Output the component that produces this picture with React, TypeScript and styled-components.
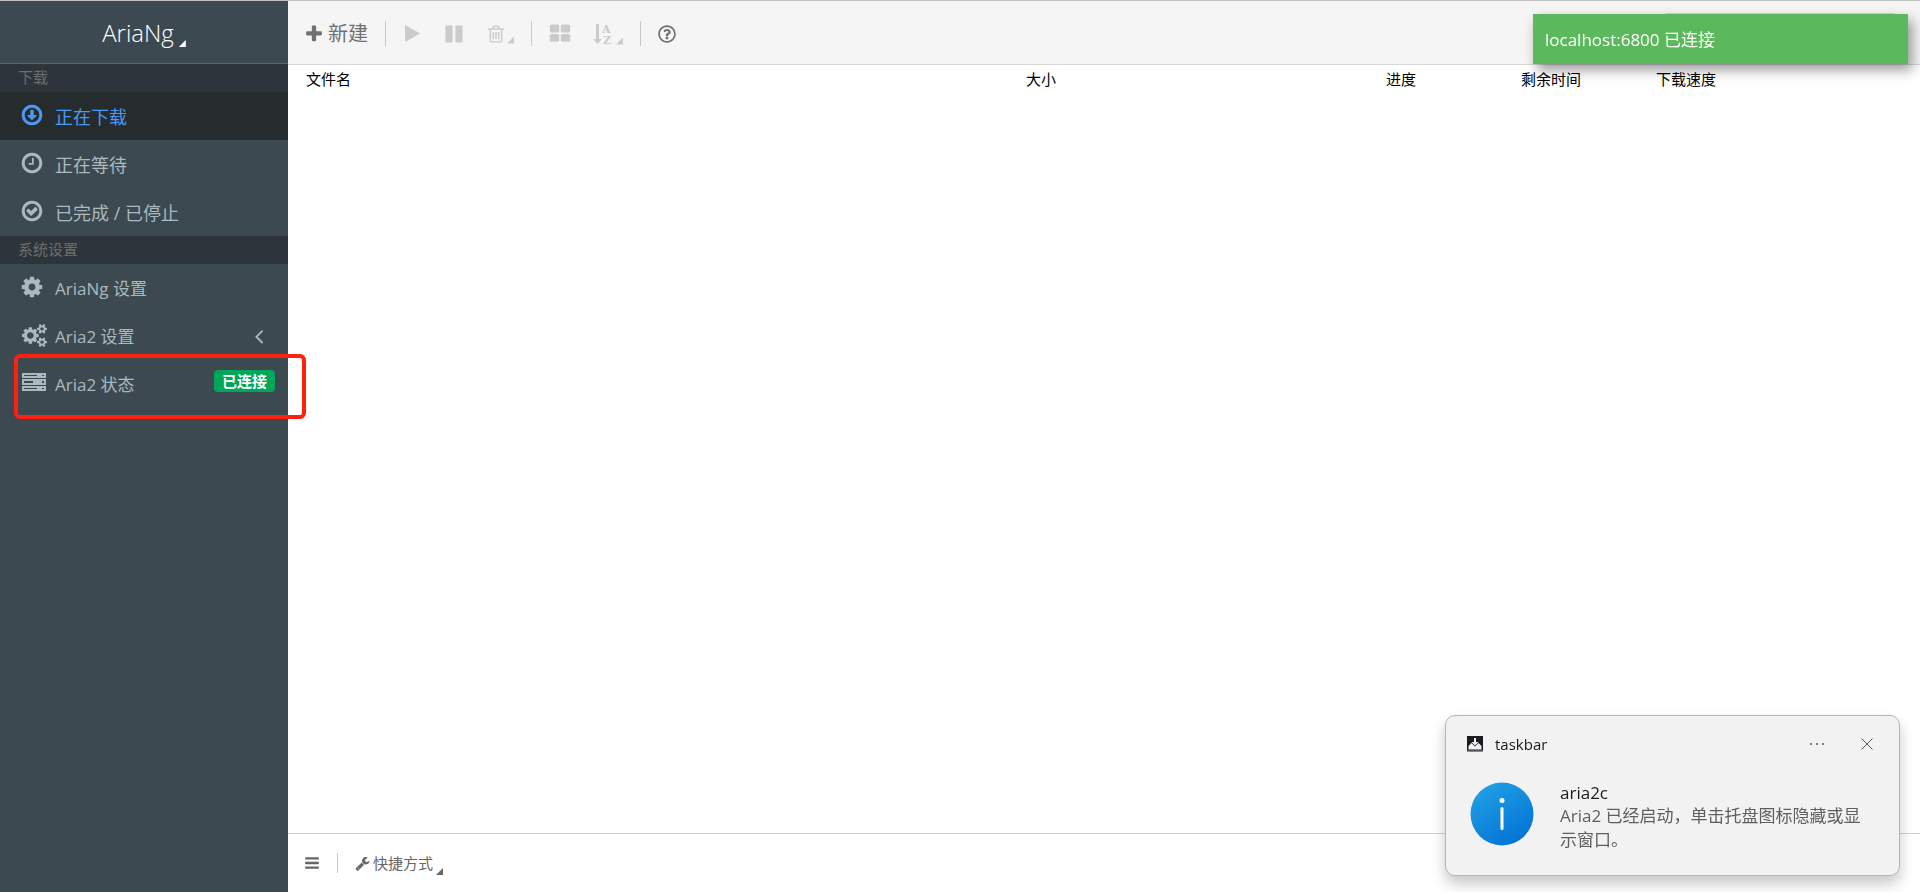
import React from 'react';
import styled, { createGlobalStyle } from 'styled-components';
import { FaRegQuestionCircle } from 'react-icons/fa';

const GlobalStyle = createGlobalStyle`
  *, *::before, *::after { box-sizing: border-box; }
  body {
    margin: 0;
    background: #fff;
    color: #000;
    font-family: "Open Sans", "Noto Sans CJK SC", sans-serif;
    font-size: 17px;
  }
  button, input { font: inherit; color: inherit; }
  button { border: 0; padding: 0; background: none; cursor: pointer; }
  a { color: inherit; text-decoration: none; }
`;

const RING =
  'M1440 896q0-148-73-273t-198-198-273-73-273 73-198 198-73 273 73 273 198 198 273 73 273-73 198-198 73-273zm224 0q0 209-103 385.5t-279.5 279.5-385.5 103-385.5-103-279.5-279.5-103-385.5 103-385.5 279.5-279.5 385.5-103 385.5 103 279.5 279.5 103 385.5z';

const SMALL_COG =
  'v140q0 16-149 31-12 27-30 52 51 113 51 138 0 4-4 7-122 71-124 71-8 0-46-47t-52-68q-20 2-30 2t-30-2q-14 21-52 68t-46 47q-2 0-124-71-4-3-4-7 0-25 51-138-18-25-30-52-149-15-149-31v-140q0-16 149-31 13-29 30-52-51-113-51-138 0-4 4-7 4-2 35-20t59-34 30-16q8 0 46 46.5t52 67.5q20-2 30-2t30 2q51-71 92-112l6-2q4 0 124 70 4 3 4 7 0 25-51 138 17 23 30 52 149 15 149 31z';

const COGS =
  'M896 896q0-106-75-181t-181-75-181 75-75 181 75 181 181 75 181-75 75-181zm768 512q0-52-38-90t-90-38-90 38-38 90q0 53 37.5 90.5t90.5 37.5 90.5-37.5 37.5-90.5zm0-1024q0-52-38-90t-90-38-90 38-38 90q0 53 37.5 90.5t90.5 37.5 90.5-37.5 37.5-90.5zm-384 421v185q0 10-7 19.5t-16 10.5l-155 24q-11 35-32 76 34 48 90 115 7 11 7 20 0 12-7 19-23 30-82.5 89.5t-78.5 59.5q-11 0-21-7l-115-90q-37 19-77 31-11 108-23 155-7 24-30 24h-186q-11 0-20-7.5t-10-17.5l-23-153q-34-10-75-31l-118 89q-7 7-20 7-11 0-21-8-144-133-144-160 0-9 7-19 10-14 41-53t47-61q-23-44-35-82l-152-24q-10-1-17-9.5t-7-19.5v-185q0-10 7-19.5t16-10.5l155-24q11-35 32-76-34-48-90-115-7-11-7-20 0-12 7-20 22-30 82-89t79-59q11 0 21 7l115 90q34-18 77-32 11-108 23-154 7-24 30-24h186q11 0 20 7.5t10 17.5l23 153q34 10 75 31l118-89q8-7 20-7 11 0 21 8 144 133 144 160 0 8-7 19-12 16-42 54t-45 60q23 48 34 82l152 23q10 2 17 10.5t7 19.5z' +
  'M1920 1338' + SMALL_COG + 'M1920 314' + SMALL_COG;

const ICONS = {
  down:
    'M1248 928q0 14-10 24l-319 319q-10 9-23 9t-23-9l-320-320q-15-16-7-35 8-20 30-20h192v-352q0-14 9-23t23-9h192q14 0 23 9t9 23v352h192q14 0 23 9t9 23z' + RING,
  clock:
    'M1024 544v448q0 14-9 23t-23 9h-320q-14 0-23-9t-9-23v-64q0-14 9-23t23-9h224v-352q0-14 9-23t23-9h64q14 0 23 9t9 23z' + RING,
  check:
    'M1299 813l-422 422q-19 19-45 19t-45-19l-294-294q-19-19-19-45t19-45l102-102q19-19 45-19t45 19l147 147 275-275q19-19 45-19t45 19l102 102q19 19 19 45t-19 45z' + RING,
  cog:
    'M1152 896q0-106-75-181t-181-75-181 75-75 181 75 181 181 75 181-75 75-181zm512-109v222q0 12-8 23t-20 13l-185 28q-19 54-39 91 35 50 107 138 10 12 10 25t-9 23q-27 37-99 108t-94 71q-12 0-26-9l-138-108q-44 23-91 38-16 136-29 186-7 28-36 28h-222q-14 0-24.5-8.5t-11.5-21.5l-28-184q-49-16-90-37l-141 107q-10 9-25 9-14 0-25-11-126-114-165-168-7-10-7-23 0-12 8-23 15-21 51-66.5t54-70.5q-27-50-41-99l-183-27q-13-2-21-12.5t-8-23.5v-222q0-12 8-23t19-13l186-28q14-46 39-92-40-57-107-138-10-12-10-24 0-10 9-23 26-36 98.5-107.5t94.5-71.5q13 0 26 10l138 107q44-23 91-38 16-136 29-186 7-28 36-28h222q14 0 24.5 8.5t11.5 21.5l28 184q49 16 90 37l142-107q9-9 24-9 13 0 25 10 129 119 165 170 7 8 7 22 0 12-8 23-15 21-51 66.5t-54 70.5q26 50 41 98l183 28q13 2 21 12.5t8 23.5z',
  plus:
    'M1600 736v192q0 40-28 68t-68 28h-416v416q0 40-28 68t-68 28h-192q-40 0-68-28t-28-68v-416h-416q-40 0-68-28t-28-68v-192q0-40 28-68t68-28h416v-416q0-40 28-68t68-28h192q40 0 68 28t28 68v416h416q40 0 68 28t28 68z',
  play:
    'M1576 927l-1328 738q-23 13-39.5 3t-16.5-36v-1472q0-26 16.5-36t39.5 3l1328 738q23 13 23 31t-23 31z',
  pause:
    'M1664 192v1408q0 26-19 45t-45 19h-512q-26 0-45-19t-19-45v-1408q0-26 19-45t45-19h512q26 0 45 19t19 45zm-896 0v1408q0 26-19 45t-45 19h-512q-26 0-45-19t-19-45v-1408q0-26 19-45t45-19h512q26 0 45 19t19 45z',
  trash:
    'M704 736v576q0 14-9 23t-23 9h-64q-14 0-23-9t-9-23v-576q0-14 9-23t23-9h64q14 0 23 9t9 23zm256 0v576q0 14-9 23t-23 9h-64q-14 0-23-9t-9-23v-576q0-14 9-23t23-9h64q14 0 23 9t9 23zm256 0v576q0 14-9 23t-23 9h-64q-14 0-23-9t-9-23v-576q0-14 9-23t23-9h64q14 0 23 9t9 23zm128 724v-948h-896v948q0 22 7 40.5t14.5 27 10.5 8.5h832q3 0 10.5-8.5t14.5-27 7-40.5zm-672-1076h448l-48-117q-7-9-17-11h-317q-10 2-17 11zm928 32v64q0 14-9 23t-23 9h-96v948q0 83-47 143.5t-113 60.5h-832q-66 0-113-58.5t-47-141.5v-952h-96q-14 0-23-9t-9-23v-64q0-14 9-23t23-9h309l70-167q15-37 54-63t79-26h320q40 0 79 26t54 63l70 167h309q14 0 23 9t9 23z',
  grid:
    'M832 1024v384q0 52-38 90t-90 38h-512q-52 0-90-38t-38-90v-384q0-52 38-90t90-38h512q52 0 90 38t38 90zm0-768v384q0 52-38 90t-90 38h-512q-52 0-90-38t-38-90v-384q0-52 38-90t90-38h512q52 0 90 38t38 90zm896 768v384q0 52-38 90t-90 38h-512q-52 0-90-38t-38-90v-384q0-52 38-90t90-38h512q52 0 90 38t38 90zm0-768v384q0 52-38 90t-90 38h-512q-52 0-90-38t-38-90v-384q0-52 38-90t90-38h512q52 0 90 38t38 90z',
  wrench:
    'M448 1472q0-26-19-45t-45-19-45 19-19 45 19 45 45 19 45-19 19-45zm644-420l-682 682q-37 37-90 37-52 0-91-37l-106-108q-38-36-38-90 0-53 38-91l681-681q39 98 114.5 173.5t173.5 114.5zm634-435q0 39-23 106-47 134-164.5 217.5t-258.5 83.5q-185 0-316.5-131.5t-131.5-316.5 131.5-316.5 316.5-131.5q58 0 121.5 16.5t107.5 46.5q16 11 16 28t-16 28l-293 169v224l193 107q5-3 79-48.5t135.5-81 70.5-35.5q15 0 23.5 10t8.5 25z',
  left:
    'M1203 544q0 13-10 23l-393 393 393 393q10 10 10 23t-10 23l-50 50q-10 10-23 10t-23-10l-466-466q-10-10-10-23t10-23l466-466q10-10 23-10t23 10l50 50q10 10 10 23z',
  bars:
    'M1664 1344v128q0 26-19 45t-45 19h-1408q-26 0-45-19t-19-45v-128q0-26 19-45t45-19h1408q26 0 45 19t19 45zm0-512v128q0 26-19 45t-45 19h-1408q-26 0-45-19t-19-45v-128q0-26 19-45t45-19h1408q26 0 45 19t19 45zm0-512v128q0 26-19 45t-45 19h-1408q-26 0-45-19t-19-45v-128q0-26 19-45t45-19h1408q26 0 45 19t19 45z',
};

type IconName = keyof typeof ICONS;

const Glyph = styled.svg<{ $size: number }>`
  display: block;
  flex: none;
  width: ${(p) => p.$size}px;
  height: ${(p) => p.$size}px;
  fill: currentColor;
`;

const Icon = ({ name, size }: { name: IconName; size: number }) => (
  <Glyph $size={size} viewBox="0 0 1792 1792" aria-hidden="true">
    <path d={ICONS[name]} fillRule="evenodd" />
  </Glyph>
);

const CogsIcon = () => (
  <Glyph $size={25} viewBox="0 -64 1920 1920" aria-hidden="true">
    <path d={COGS} fillRule="evenodd" />
  </Glyph>
);

const ServerIcon = () => (
  <Glyph $size={24} viewBox="0 0 24 24" aria-hidden="true">
    <path
      fillRule="evenodd"
      d="M0 2h24v5H0zM2 4v1h13V4zM20 4v1h2V4zM0 8h24v6H0zM2 10v2h9v-2zM20 10v2h2v-2zM0 15h24v5H0zM2 17v1h13v-1zM20 17v1h2v-1z"
    />
  </Glyph>
);

const SortIcon = () => (
  <Glyph $size={22} viewBox="0 0 22 22" aria-hidden="true">
    <path d="M3 1h3v15h3l-4.500 5L0 16h3z" />
    <text x="9" y="10" fontFamily="DejaVu Serif" fontWeight="700" fontSize="11">A</text>
    <text x="10" y="21" fontFamily="DejaVu Serif" fontWeight="700" fontSize="11">Z</text>
  </Glyph>
);

const Corner = styled.span`
  width: 7px;
  height: 7px;
  flex: none;
  align-self: flex-end;
  background: currentColor;
  clip-path: polygon(100% 0, 100% 100%, 0 100%);
`;

const Page = styled.div`
  display: flex;
  min-height: 100vh;
  border-top: 1px solid #c0c0c0;
`;

const Sidebar = styled.aside`
  flex: none;
  width: 288px;
  background: #3d4951;
  color: #a9babf;
`;

const Brand = styled.button`
  display: flex;
  align-items: center;
  justify-content: center;
  gap: 5px;
  width: 100%;
  height: 63px;
  padding-top: 2px;
  border-bottom: 1px solid #56646d;
  color: #fff;
  font-size: 24px;
  font-weight: 300;
  line-height: 32px;

  ${Corner} { margin-bottom: 16px; }
`;

const SectionTitle = styled.h2`
  margin: 0;
  padding: 0 0 2px 18px;
  background: #2e343c;
  color: #6d6d6d;
  font-size: 15px;
  font-weight: 400;
  line-height: 26px;
`;

const Menu = styled.ul<{ $fontSize: number }>`
  margin: 0;
  padding: 0;
  font-size: ${(p) => p.$fontSize}px;
  list-style: none;
`;

const MenuItem = styled.li`
  position: relative;
`;

const MenuLink = styled.a<{ $active?: boolean }>`
  display: flex;
  align-items: center;
  height: 48px;
  padding: 0 13px 0 20px;
  background: ${(p) => (p.$active ? '#262c2e' : 'transparent')};
  color: ${(p) => (p.$active ? '#4a9af5' : 'inherit')};
`;

const MenuIcon = styled.span<{ $wide?: boolean }>`
  display: flex;
  flex: none;
  width: 35px;
  padding-bottom: 2px;
  padding-left: ${(p) => (p.$wide ? 2 : 0)}px;
`;

const MenuText = styled.span`
  flex: 1;
  padding-top: 2px;
  line-height: 24px;
`;

const MenuArrow = styled.span`
  padding-right: 4px;
`;

const Badge = styled.span`
  padding: 0 8px;
  margin-bottom: 6px;
  border-radius: 4px;
  background: #00a65a;
  color: #fff;
  font-size: 15px;
  font-weight: 700;
  line-height: 22px;
`;

const Highlight = styled.span`
  position: absolute;
  top: -6px;
  left: 14px;
  width: 292px;
  height: 65px;
  border: 4px solid #ff2010;
  border-radius: 6px;
  pointer-events: none;
  z-index: 1;
`;

const Main = styled.div`
  display: flex;
  flex: 1;
  flex-direction: column;
  min-width: 0;
`;

const Toolbar = styled.header`
  display: flex;
  align-items: center;
  height: 64px;
  padding: 2px 25px 0 16px;
  background: #f5f5f5;
  border-bottom: 1px solid #d8d8d8;
`;

const Group = styled.div`
  display: flex;
  align-items: center;
  gap: 22px;
`;

const Divider = styled.span<{ $height: number }>`
  width: 1px;
  height: ${(p) => p.$height}px;
  margin: 0 17px;
  background: #c8c8c8;
`;

const ToolButton = styled.button<{ $gap?: number }>`
  display: flex;
  align-items: center;
  gap: ${(p) => p.$gap ?? 1}px;
  color: #707070;
  font-size: 20px;
  line-height: 32px;

  &:disabled { color: #cbcbcb; cursor: default; }
`;

const Search = styled.input`
  width: 230px;
  height: 42px;
  margin-left: auto;
  border: 1px solid #ccd3d7;
  background: #fff;
`;

const Tasks = styled.main`
  flex: 1;
  padding-left: 12px;
`;

const TaskTable = styled.table`
  width: 100%;
  border-collapse: collapse;
  table-layout: fixed;
`;

const HeadCell = styled.th<{ $share: number }>`
  width: calc(100% * ${(p) => p.$share} / 36);
  height: 28px;
  padding: 0 6px;
  font-size: 15px;
  font-weight: 400;
  line-height: 20px;
  text-align: left;
`;

const Footer = styled.footer`
  display: flex;
  align-items: center;
  height: 59px;
  padding-left: 16px;
  border-top: 1px solid #d0d0dc;
`;

const FootButton = styled.button`
  display: flex;
  align-items: center;
  gap: 3px;
  color: #666;
  font-size: 15px;
  line-height: 24px;
`;

const Toast = styled.div`
  position: fixed;
  top: 14px;
  right: 12px;
  width: 375px;
  padding: 14px 12px 12px;
  background: #5cb85c;
  color: #fff;
  line-height: 24px;
  box-shadow: 4px 6px 12px rgba(0, 0, 0, 0.4);
  z-index: 2;
`;

const Notice = styled.section`
  position: fixed;
  right: 20px;
  bottom: 16px;
  width: 455px;
  padding: 16px 20px 23px;
  border: 1px solid #b4b4b4;
  border-radius: 10px;
  background: #f2f2f2;
  box-shadow: 0 8px 14px rgba(0, 0, 0, 0.22);
  z-index: 2;
`;

const NoticeHead = styled.div`
  display: flex;
  align-items: center;
  gap: 12px;
  height: 24px;
  margin-bottom: 26px;
  padding-left: 1px;
  color: #1b1b1b;
  font-size: 15px;
`;

const NoticeActions = styled.div`
  display: flex;
  align-items: center;
  gap: 36px;
  margin-left: auto;
  padding-right: 6px;
  color: #555;
`;

const NoticeBody = styled.div`
  display: flex;
  gap: 26px;
  padding: 0 8px 0 4px;
`;

const NoticeTitle = styled.h3`
  margin: 0;
  color: #1b1b1b;
  font-size: 17px;
  font-weight: 400;
  line-height: 22px;
`;

const NoticeText = styled.p`
  margin: 0;
  color: #5f5f5f;
  line-height: 24px;
`;

const TrayIcon = () => (
  <Glyph $size={16} viewBox="0 0 16 16" aria-hidden="true">
    <path fill="#1c1c20" d="M0 0h16v16H0z" />
    <path fill="#f2f2f2" d="M7 2h2v4h2.500L8 9.500 4.500 6H7zM1.500 13.500V10l3-3L8 10.500 11.500 7l3 3v3.500z" />
    <path fill="#8a8a8a" d="M0 14.500h16V16H0z" />
  </Glyph>
);

const InfoIcon = () => (
  <Glyph $size={64} viewBox="0 0 64 64" aria-hidden="true">
    <defs>
      <linearGradient id="info" x1="0.200" y1="0" x2="0.800" y2="1">
        <stop offset="0" stopColor="#22a0e4" />
        <stop offset="1" stopColor="#0072d4" />
      </linearGradient>
    </defs>
    <circle cx="32" cy="32" r="31.500" fill="url(#info)" />
    <circle cx="32" cy="18.500" r="2.500" fill="#fff" />
    <rect x="30.500" y="25" width="3" height="23" rx="1.500" fill="#fff" />
  </Glyph>
);

const columns = [
  { title: '文件名', share: 16 },
  { title: '大小', share: 8 },
  { title: '进度', share: 3 },
  { title: '剩余时间', share: 3 },
  { title: '下载速度', share: 6 },
];

export default function App() {
  return (
    <>
      <GlobalStyle />
      <Page>
        <Sidebar>
          <Brand type="button">
            AriaNg
            <Corner />
          </Brand>
          <nav>
            <SectionTitle>下载</SectionTitle>
            <Menu $fontSize={18}>
              <MenuItem>
                <MenuLink href="#downloading" $active>
                  <MenuIcon><Icon name="down" size={24} /></MenuIcon>
                  <MenuText>正在下载</MenuText>
                </MenuLink>
              </MenuItem>
              <MenuItem>
                <MenuLink href="#waiting">
                  <MenuIcon><Icon name="clock" size={24} /></MenuIcon>
                  <MenuText>正在等待</MenuText>
                </MenuLink>
              </MenuItem>
              <MenuItem>
                <MenuLink href="#stopped">
                  <MenuIcon><Icon name="check" size={24} /></MenuIcon>
                  <MenuText>已完成 / 已停止</MenuText>
                </MenuLink>
              </MenuItem>
            </Menu>
            <SectionTitle>系统设置</SectionTitle>
            <Menu $fontSize={17}>
              <MenuItem>
                <MenuLink href="#settings/ariang">
                  <MenuIcon><Icon name="cog" size={24} /></MenuIcon>
                  <MenuText>AriaNg 设置</MenuText>
                </MenuLink>
              </MenuItem>
              <MenuItem>
                <MenuLink href="#settings/aria2">
                  <MenuIcon $wide><CogsIcon /></MenuIcon>
                  <MenuText>Aria2 设置</MenuText>
                  <MenuArrow><Icon name="left" size={24} /></MenuArrow>
                </MenuLink>
              </MenuItem>
              <MenuItem>
                <MenuLink href="#status">
                  <MenuIcon $wide><ServerIcon /></MenuIcon>
                  <MenuText>Aria2 状态</MenuText>
                  <Badge>已连接</Badge>
                </MenuLink>
                <Highlight />
              </MenuItem>
            </Menu>
          </nav>
        </Sidebar>

        <Main>
          <Toolbar>
            <ToolButton type="button" $gap={4}>
              <Icon name="plus" size={20} />
              新建
            </ToolButton>
            <Divider $height={25} />
            <Group>
              <ToolButton type="button" disabled aria-label="开始">
                <Icon name="play" size={19} />
              </ToolButton>
              <ToolButton type="button" disabled aria-label="暂停">
                <Icon name="pause" size={20} />
              </ToolButton>
              <ToolButton type="button" disabled aria-label="删除">
                <Icon name="trash" size={20} />
                <Corner />
              </ToolButton>
            </Group>
            <Divider $height={25} />
            <Group>
              <ToolButton type="button" disabled aria-label="全选">
                <Icon name="grid" size={22} />
              </ToolButton>
              <ToolButton type="button" disabled aria-label="排序">
                <SortIcon />
                <Corner />
              </ToolButton>
            </Group>
            <Divider $height={25} />
            <ToolButton type="button" aria-label="帮助">
              <FaRegQuestionCircle size={18} />
            </ToolButton>
            <Search type="search" aria-label="搜索" />
          </Toolbar>

          <Tasks>
            <TaskTable>
              <thead>
                <tr>
                  {columns.map((c) => (
                    <HeadCell key={c.title} $share={c.share} scope="col">{c.title}</HeadCell>
                  ))}
                </tr>
              </thead>
            </TaskTable>
          </Tasks>

          <Footer>
            <FootButton type="button" aria-label="切换侧栏">
              <Icon name="bars" size={16} />
            </FootButton>
            <Divider $height={20} />
            <FootButton type="button">
              <Icon name="wrench" size={15} />
              快捷方式
              <Corner />
            </FootButton>
          </Footer>
        </Main>
      </Page>

      <Toast role="status">localhost:6800 已连接</Toast>

      <Notice>
        <NoticeHead>
          <TrayIcon />
          taskbar
          <NoticeActions>
            <button type="button" aria-label="更多">
              <Glyph $size={16} viewBox="0 0 16 16" aria-hidden="true">
                <circle cx="2" cy="8" r="1" />
                <circle cx="8" cy="8" r="1" />
                <circle cx="14" cy="8" r="1" />
              </Glyph>
            </button>
            <button type="button" aria-label="关闭">
              <Glyph $size={12} viewBox="0 0 12 12" aria-hidden="true">
                <path d="M0.500 0.500l11 11M11.500 0.500l-11 11" stroke="currentColor" />
              </Glyph>
            </button>
          </NoticeActions>
        </NoticeHead>
        <NoticeBody>
          <InfoIcon />
          <div>
            <NoticeTitle>aria2c</NoticeTitle>
            <NoticeText>Aria2 已经启动，单击托盘图标隐藏或显示窗口。</NoticeText>
          </div>
        </NoticeBody>
      </Notice>
    </>
  );
}
